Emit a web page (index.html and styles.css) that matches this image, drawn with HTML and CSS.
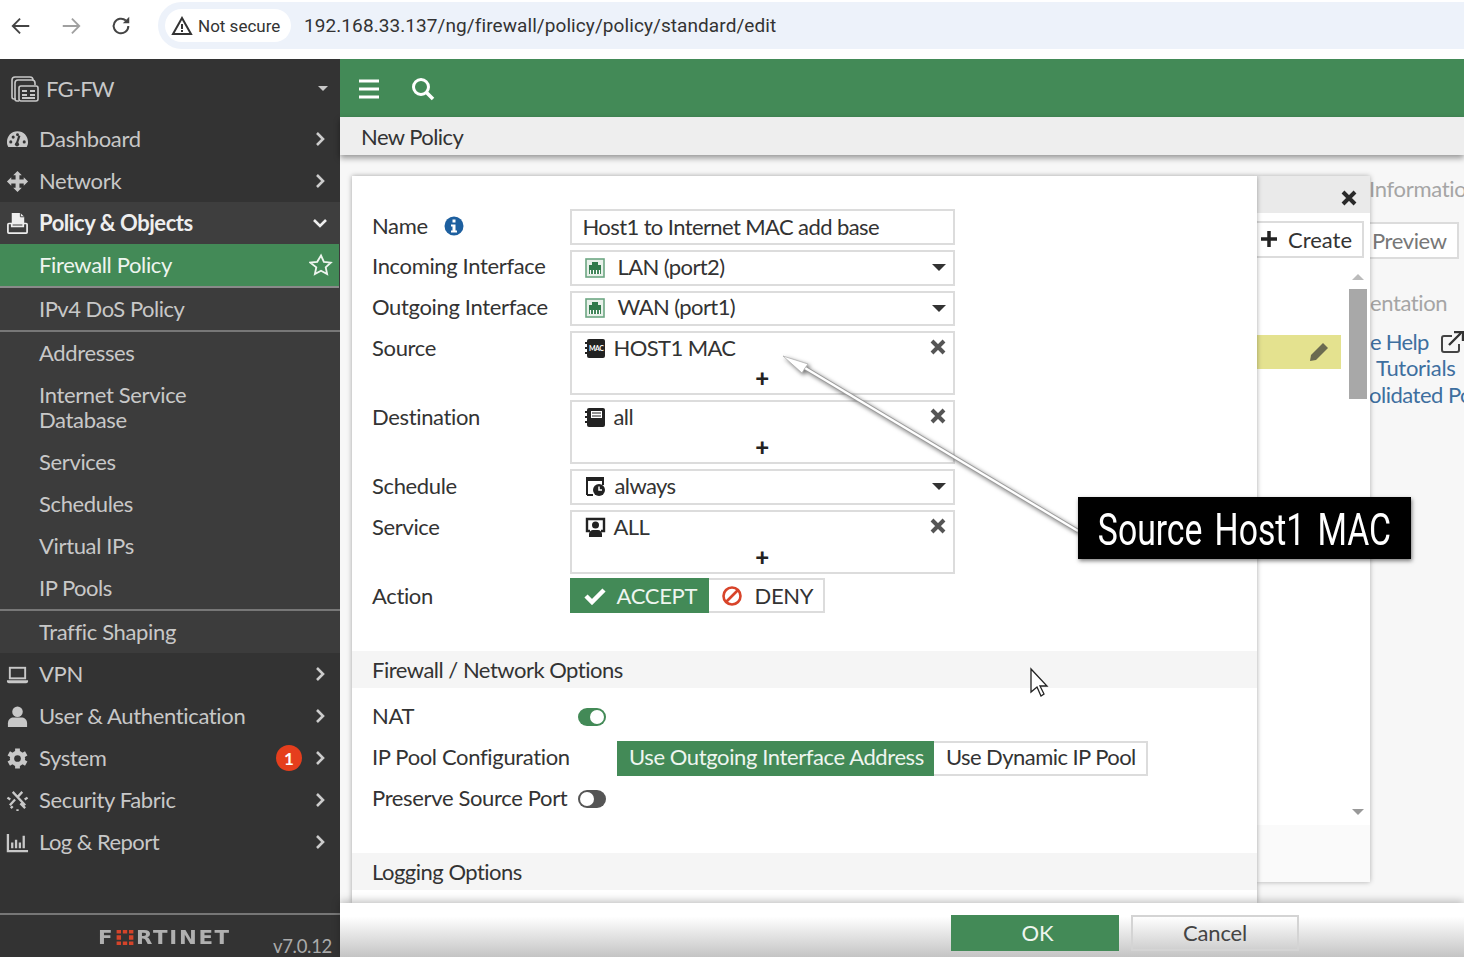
FILE: index.html
```html
<!DOCTYPE html>
<html lang="en">
<head>
    <meta charset="UTF-8">
    <title>New Policy</title>
    <link rel="stylesheet" href="styles.css">
</head>
<body>
    <!-- browser toolbar -->
    <div class="browser-bar">
        <svg class="nav-btn" width="22" height="22" viewBox="0 0 24 24"><path d="M21 12H4M11 4l-8 8 8 8" fill="none" stroke="#444" stroke-width="2"/></svg>
        <svg class="nav-btn" width="22" height="22" viewBox="0 0 24 24"><path d="M3 12h17M13 4l8 8-8 8" fill="none" stroke="#a0a0a0" stroke-width="2"/></svg>
        <svg class="nav-btn" width="22" height="22" viewBox="0 0 24 24"><path d="M20 12a8 8 0 1 1-2.6-5.9" fill="none" stroke="#444" stroke-width="2.2"/><path d="M21 2v7h-7z" fill="#444"/></svg>
        <div class="url-pill">
            <div class="secure-chip">
                <svg width="22" height="20" viewBox="0 0 22 20"><path d="M11 2L2 18h18z" fill="none" stroke="#333" stroke-width="2"/><path d="M10 8h2v5h-2zM10 14h2v2h-2z" fill="#333"/></svg>
                <span>Not secure</span>
            </div>
            <span class="url-text">192.168.33.137/ng/firewall/policy/policy/standard/edit</span>
        </div>
    </div>

    <div class="app">
        <!-- left menu -->
        <div class="sidebar">
            <div class="device">
                <svg width="30" height="30" viewBox="0 0 30 30" fill="none" stroke="#c8c8c8" stroke-width="1.6"><path d="M6 25H4a2 2 0 0 1-2-2V6a3 3 0 0 1 3-3h15a3 3 0 0 1 3 3"/><path d="M9 27H7a2 2 0 0 1-2-2V9a3 3 0 0 1 3-3h14a3 3 0 0 1 3 3v2"/><rect x="9" y="12" width="19" height="15" rx="2" fill="#333"/><path d="M12 17h5M20 17h5M12 21h5M20 21h5M12 24h13" stroke-width="2"/></svg>
                <span class="device-name">FG-FW</span>
                <span class="caret-light"></span>
            </div>

            <a class="nav-item">
                <svg class="nav-icon" viewBox="0 0 24 24"><path d="M12 3.500C5.700 3.500 1 8.500 1 14.500c0 2 .5 3.700 1.400 5.200h19.200c.9-1.500 1.400-3.200 1.400-5.200 0-6-4.700-11-11-11z" fill="#c8c8c8"/><path d="M11 17l3-9" stroke="#333" stroke-width="2.200"/><circle cx="5" cy="14.500" r="1.600" fill="#333"/><circle cx="7.500" cy="9.500" r="1.600" fill="#333"/><circle cx="12" cy="7" r="1.500" fill="#333"/><circle cx="19" cy="14.500" r="1.600" fill="#333"/><circle cx="11.500" cy="17" r="2.200" fill="#333"/></svg>
                <span class="nav-label">Dashboard</span>
                <svg class="chevron" viewBox="0 0 12 16"><path d="M3 2l6 6-6 6" fill="none" stroke="#ccc" stroke-width="2.600"/></svg>
            </a>
            <a class="nav-item">
                <svg class="nav-icon" viewBox="0 0 24 24"><path d="M12 1l4.500 4.500H14V10h4.500V7.500L23 12l-4.500 4.500V14H14v4.500h2.500L12 23l-4.500-4.500H10V14H5.500v2.500L1 12l4.500-4.500V10H10V5.500H7.500z" fill="#c8c8c8"/></svg>
                <span class="nav-label">Network</span>
                <svg class="chevron" viewBox="0 0 12 16"><path d="M3 2l6 6-6 6" fill="none" stroke="#ccc" stroke-width="2.600"/></svg>
            </a>
            <a class="nav-item nav-open">
                <svg class="nav-icon" viewBox="0 0 24 24"><path d="M6 1h9l4 4v8H6z" fill="#eee"/><path d="M15 1v4h4" fill="none" stroke="#444"/><path d="M3 12h3v3h12v-3h3a1 1 0 0 1 1 1v8a1 1 0 0 1-1 1H3a1 1 0 0 1-1-1v-8a1 1 0 0 1 1-1z" fill="none" stroke="#eee" stroke-width="1.800"/></svg>
                <span class="nav-label">Policy &amp; Objects</span>
                <svg class="chevron chevron-down" viewBox="0 0 16 12"><path d="M2 3l6 6 6-6" fill="none" stroke="#eee" stroke-width="2.600"/></svg>
            </a>
            <div class="sub-menu">
                <a class="sub-item sub-active">
                    <span class="nav-label">Firewall Policy</span>
                    <svg class="star" viewBox="0 0 24 24"><path d="M12 2.500l2.900 6.300 6.900.8-5.100 4.700 1.400 6.800-6.100-3.400-6.100 3.400 1.400-6.800L1.300 9.600l6.900-.8z" fill="none" stroke="#eef5ef" stroke-width="1.800"/></svg>
                </a>
                <a class="sub-item sub-line">IPv4 DoS Policy</a>
                <a class="sub-item">Addresses</a>
                <a class="sub-item sub-tall">Internet Service<br>Database</a>
                <a class="sub-item">Services</a>
                <a class="sub-item">Schedules</a>
                <a class="sub-item">Virtual IPs</a>
                <a class="sub-item sub-line">IP Pools</a>
                <a class="sub-item">Traffic Shaping</a>
            </div>
            <a class="nav-item">
                <svg class="nav-icon" viewBox="0 0 24 24"><rect x="4" y="5" width="16" height="11" fill="none" stroke="#c8c8c8" stroke-width="2"/><path d="M1 18h22v1a2 2 0 0 1-2 2H3a2 2 0 0 1-2-2z" fill="#c8c8c8"/></svg>
                <span class="nav-label">VPN</span>
                <svg class="chevron" viewBox="0 0 12 16"><path d="M3 2l6 6-6 6" fill="none" stroke="#ccc" stroke-width="2.600"/></svg>
            </a>
            <a class="nav-item">
                <svg class="nav-icon" viewBox="0 0 24 24"><circle cx="12" cy="7" r="5.500" fill="#c8c8c8"/><path d="M2 23v-4c0-4 3-6 6-6h8c3 0 6 2 6 6v4z" fill="#c8c8c8"/></svg>
                <span class="nav-label">User &amp; Authentication</span>
                <svg class="chevron" viewBox="0 0 12 16"><path d="M3 2l6 6-6 6" fill="none" stroke="#ccc" stroke-width="2.600"/></svg>
            </a>
            <a class="nav-item">
                <svg class="nav-icon" viewBox="0 0 24 24"><path d="M12 1.500v21M21.100 6.700L2.900 17.300M21.100 17.300L2.900 6.700" stroke="#c8c8c8" stroke-width="5"/><circle cx="12" cy="12" r="8" fill="#c8c8c8"/><circle cx="12" cy="12" r="3.500" fill="#333"/></svg>
                <span class="nav-label">System</span>
                <span class="badge">1</span>
                <svg class="chevron" viewBox="0 0 12 16"><path d="M3 2l6 6-6 6" fill="none" stroke="#ccc" stroke-width="2.600"/></svg>
            </a>
            <a class="nav-item">
                <svg class="nav-icon" viewBox="0 0 24 24"><path d="M7 3l13 14M17 3l-5.500 6M9.500 11L4 17M5 20l2-2M15 15l5 5" fill="none" stroke="#c8c8c8" stroke-width="2.400"/><path d="M1.500 9l3 2M22.500 9l-3 2M12 21v2" stroke="#c8c8c8" stroke-width="2.400"/></svg>
                <span class="nav-label">Security Fabric</span>
                <svg class="chevron" viewBox="0 0 12 16"><path d="M3 2l6 6-6 6" fill="none" stroke="#ccc" stroke-width="2.600"/></svg>
            </a>
            <a class="nav-item">
                <svg class="nav-icon" viewBox="0 0 24 24"><path d="M2 3v18h21" fill="none" stroke="#c8c8c8" stroke-width="2.400"/><path d="M6.500 12v6M10.500 9v9M14.500 12v6M18.500 5v13" stroke="#c8c8c8" stroke-width="2.400"/></svg>
                <span class="nav-label nav-tight">Log &amp; Report</span>
                <svg class="chevron" viewBox="0 0 12 16"><path d="M3 2l6 6-6 6" fill="none" stroke="#ccc" stroke-width="2.600"/></svg>
            </a>

            <div class="side-footer">
                <div class="logo">
                    <span class="logo-f">F</span>
                    <svg width="18" height="15" viewBox="0 0 19 17" fill="#d5442a"><path d="M0 0h5v4H0zM7 0h5v4H7zM14 0h5v4h-5zM0 6h5v5H0zM14 6h5v5h-5zM0 13h5v4H0zM7 13h5v4H7zM14 13h5v4h-5z"/></svg>
                    <span class="logo-rest">RTINET</span>
                </div>
                <span class="version">v7.0.12</span>
            </div>
        </div>

        <!-- main area -->
        <div class="main">
            <div class="topbar">
                <svg width="22" height="20" viewBox="0 0 22 20"><path d="M1 2h20M1 10h20M1 18h20" stroke="#fff" stroke-width="3"/></svg>
                <svg width="26" height="26" viewBox="0 0 26 26"><circle cx="11" cy="11" r="7.500" fill="none" stroke="#fff" stroke-width="3"/><path d="M16.500 16.500l6.500 6.500" stroke="#fff" stroke-width="3.500"/></svg>
            </div>
            <div class="title-bar">New Policy</div>

            <div class="content">
                <div class="dialog">
                    <div class="form-rows">
                        <div class="form-row">
                            <div class="form-label">Name <svg class="info-icon" width="20" height="20" viewBox="0 0 20 20"><circle cx="10" cy="10" r="9.500" fill="#1d5f9f"/><rect x="8.500" y="3.500" width="3" height="3" fill="#fff"/><path d="M7 8.500h4.500v6H13v2H7v-2h1.500v-4H7z" fill="#fff"/></svg></div>
                            <div class="field">Host1 to Internet MAC add base</div>
                        </div>
                        <div class="form-row row-high">
                            <div class="form-label">Incoming Interface</div>
                            <div class="field field-select">
                                <svg class="port-icon" width="20" height="20" viewBox="0 0 20 20"><rect x="1" y="1" width="18" height="18" fill="#e8f1ea" stroke="#6da783" stroke-width="1.600"/><path d="M4 11V7h3V4h6v3h3v4z" fill="#2f7a4a"/><path d="M4 11v5h12v-5z" fill="#2f7a4a"/><path d="M5.500 12v4M8.500 12v4M11.500 12v4M14.500 12v4" stroke="#fff" stroke-width="1.200"/></svg>
                                <span>LAN (port2)</span>
                                <span class="caret"></span>
                            </div>
                        </div>
                        <div class="form-row row-short row-high">
                            <div class="form-label">Outgoing Interface</div>
                            <div class="field field-select">
                                <svg class="port-icon" width="20" height="20" viewBox="0 0 20 20"><rect x="1" y="1" width="18" height="18" fill="#e8f1ea" stroke="#6da783" stroke-width="1.600"/><path d="M4 11V7h3V4h6v3h3v4z" fill="#2f7a4a"/><path d="M4 11v5h12v-5z" fill="#2f7a4a"/><path d="M5.500 12v4M8.500 12v4M11.500 12v4M14.500 12v4" stroke="#fff" stroke-width="1.200"/></svg>
                                <span>WAN (port1)</span>
                                <span class="caret"></span>
                            </div>
                        </div>
                        <div class="form-row row-multi">
                            <div class="form-label">Source</div>
                            <div class="field field-multi">
                                <div class="chip-row">
                                    <svg class="obj-icon" width="21" height="21" viewBox="0 0 21 21"><rect x="2" y="1" width="18" height="19" rx="2" fill="#222"/><path d="M0 5h3M0 10h3M0 15h3" stroke="#222" stroke-width="2"/><text x="4" y="13" class="mac-tag">MAC</text></svg>
                                    <span class="chip-text">HOST1 MAC</span>
                                    <svg class="remove" width="16" height="16" viewBox="0 0 16 16"><path d="M2 2l12 12M14 2L2 14" stroke="#555" stroke-width="4"/></svg>
                                </div>
                                <div class="add-row">+</div>
                            </div>
                        </div>
                        <div class="form-row row-multi">
                            <div class="form-label">Destination</div>
                            <div class="field field-multi">
                                <div class="chip-row">
                                    <svg class="obj-icon" width="21" height="21" viewBox="0 0 21 21"><rect x="2" y="1" width="18" height="19" rx="2" fill="#222"/><path d="M0 5h3M0 10h3M0 15h3" stroke="#222" stroke-width="2"/><rect x="6" y="4" width="11" height="7" fill="#fff"/><path d="M7 6h9M7 9h9" stroke="#222"/></svg>
                                    <span class="chip-text">all</span>
                                    <svg class="remove" width="16" height="16" viewBox="0 0 16 16"><path d="M2 2l12 12M14 2L2 14" stroke="#555" stroke-width="4"/></svg>
                                </div>
                                <div class="add-row">+</div>
                            </div>
                        </div>
                        <div class="form-row">
                            <div class="form-label">Schedule</div>
                            <div class="field field-select">
                                <svg class="obj-icon" width="21" height="21" viewBox="0 0 21 21"><path d="M2 19V2h16v7" fill="none" stroke="#222" stroke-width="2"/><path d="M2 2h16v3H2z" fill="#222"/><path d="M2 19h6" stroke="#222" stroke-width="2"/><circle cx="14" cy="14" r="6" fill="#222"/><path d="M14 10.500V14h3" fill="none" stroke="#fff" stroke-width="1.500"/></svg>
                                <span>always</span>
                                <span class="caret"></span>
                            </div>
                        </div>
                        <div class="form-row row-multi">
                            <div class="form-label">Service</div>
                            <div class="field field-multi">
                                <div class="chip-row">
                                    <svg class="obj-icon" width="21" height="21" viewBox="0 0 21 21"><path d="M5 14H2V2h17v12h-3" fill="none" stroke="#222" stroke-width="2.400"/><circle cx="10.500" cy="8" r="3.500" fill="#222"/><path d="M4 20v-3c0-2 2-4 4-4h5c2 0 4 2 4 4v3z" fill="#222"/></svg>
                                    <span class="chip-text">ALL</span>
                                    <svg class="remove" width="16" height="16" viewBox="0 0 16 16"><path d="M2 2l12 12M14 2L2 14" stroke="#555" stroke-width="4"/></svg>
                                </div>
                                <div class="add-row">+</div>
                            </div>
                        </div>
                        <div class="form-row row-action">
                            <div class="form-label">Action</div>
                            <div class="toggle-group">
                                <div class="opt opt-on opt-accept">
                                    <svg width="22" height="18" viewBox="0 0 22 18"><path d="M2 9l6 6L20 3" fill="none" stroke="#fff" stroke-width="4.500"/></svg>
                                    ACCEPT
                                </div>
                                <div class="opt opt-deny">
                                    <svg width="22" height="22" viewBox="0 0 22 22"><circle cx="11" cy="11" r="8.500" fill="none" stroke="#d8442a" stroke-width="2.600"/><path d="M5 17L17 5" stroke="#d8442a" stroke-width="2.600"/></svg>
                                    DENY
                                </div>
                            </div>
                        </div>
                    </div>

                    <div class="section-head section-firewall">Firewall / Network Options</div>
                    <div class="option-rows">
                        <div class="option-row">
                            <div class="form-label">NAT</div>
                            <div class="switch switch-on"><span></span></div>
                        </div>
                        <div class="option-row">
                            <div class="form-label pool-label">IP Pool Configuration</div>
                            <div class="toggle-group">
                                <div class="opt opt-on opt-pool">Use Outgoing Interface Address</div>
                                <div class="opt opt-pool opt-dynamic">Use Dynamic IP Pool</div>
                            </div>
                        </div>
                        <div class="option-row">
                            <div class="form-label">Preserve Source Port</div>
                            <div class="switch switch-off"><span></span></div>
                        </div>
                    </div>
                    <div class="section-head section-logging">Logging Options</div>
                </div>

                <div class="side-panel">
                    <div class="panel-head">
                        <svg width="16" height="16" viewBox="0 0 16 16"><path d="M2 2l12 12M14 2L2 14" stroke="#2a2a2a" stroke-width="4"/></svg>
                    </div>
                    <div class="create-btn">
                        <svg width="18" height="18" viewBox="0 0 18 18"><path d="M9 1v16M1 9h16" stroke="#222" stroke-width="3.500"/></svg>
                        Create
                    </div>
                    <div class="panel-body">
                        <div class="panel-list">
                            <div class="picked-row">
                                <svg width="22" height="22" viewBox="0 0 22 22"><path d="M15 2l5 5L8 19l-6 1 1-6z" fill="#6b6b50"/></svg>
                            </div>
                        </div>
                        <div class="panel-scroll">
                            <span class="scroll-up"></span>
                            <span class="scroll-thumb"></span>
                            <span class="scroll-down"></span>
                        </div>
                    </div>
                    <div class="panel-foot"></div>
                </div>

                <div class="info-panel">
                    <div class="info-title">Informatio</div>
                    <div class="preview-btn">Preview</div>
                    <div class="info-docs">entation</div>
                    <div class="info-link info-help">e Help
                        <svg width="24" height="22" viewBox="0 0 24 22"><path d="M12 5H4a2 2 0 0 0-2 2v12a2 2 0 0 0 2 2h13a2 2 0 0 0 2-2v-6" fill="none" stroke="#444" stroke-width="2"/><path d="M9 14L21 2M14 1h9v9" fill="none" stroke="#333" stroke-width="2.400"/></svg>
                    </div>
                    <div class="info-link info-tut">Tutorials</div>
                    <div class="info-link info-pol">olidated Pc</div>
                </div>
            </div>

            <div class="footer-bar">
                <div class="btn btn-ok">OK</div>
                <div class="btn btn-cancel">Cancel</div>
            </div>
        </div>
    </div>

    <!-- video annotation on top of the page -->
    <svg class="annotation" width="1464" height="957" viewBox="0 0 1464 957">
        <g class="arrow">
            <path d="M1078 531L805 368" stroke="#9a9a9a" stroke-width="4" fill="none"/>
            <path d="M1078 531L805 368" stroke="#fff" stroke-width="2.400" fill="none"/>
            <path d="M783 356l25 8-3 4-3 5z" fill="#fff" stroke="#b0b0b0" stroke-width="0.800"/>
        </g>
        <path d="M1031 669v23l6-5 4 9 3-2-4-8h7z" fill="#fff" stroke="#222" stroke-width="1.300"/>
    </svg>
    <div class="callout"><span>Source Host1 MAC</span></div>
</body>
</html>
```

FILE: styles.css
```css
* {
    margin: 0;
    padding: 0;
    box-sizing: border-box;
}

body {
    width: 1464px;
    height: 957px;
    overflow: hidden;
    background: #fff;
    color: #333;
    font-family: 'Lato', 'Open Sans', sans-serif;
    font-size: 22px;
    position: relative;
}

/* Browser toolbar */
.browser-bar {
    height: 59px;
    background: #fff;
    display: flex;
    align-items: flex-start;
    padding-left: 10px;
}

.nav-btn {
    margin-top: 15px;
    margin-right: 28px;
}

.nav-btn:nth-child(3) {
    margin-right: 0;
    margin-left: 0;
}

.url-pill {
    flex: 1;
    height: 47px;
    margin-top: 2px;
    margin-left: 26px;
    margin-right: -30px;
    background: #edf2fa;
    border-radius: 24px;
    display: flex;
    align-items: center;
    padding-left: 7px;
    font-family: 'Roboto', sans-serif;
}

.secure-chip {
    width: 126px;
    height: 33px;
    background: #fff;
    border-radius: 17px;
    display: flex;
    align-items: center;
    gap: 5px;
    padding-left: 6px;
    font-size: 17px;
    color: #333;
}

.url-text {
    margin-left: 13px;
    font-size: 19px;
    letter-spacing: 0.08px;
    color: #333;
}

/* Layout */
.app {
    display: flex;
    height: 898px;
}

/* Sidebar */
.sidebar {
    width: 340px;
    background: #333;
    color: #c8c8c8;
    display: flex;
    flex-direction: column;
    flex-shrink: 0;
}

.device {
    height: 59px;
    display: flex;
    align-items: center;
    padding-left: 10px;
    gap: 6px;
}

.device-name {
    font-size: 22px;
    flex: 1;
    letter-spacing: -0.8px;
}

.caret-light {
    width: 0;
    height: 0;
    border-left: 5px solid transparent;
    border-right: 5px solid transparent;
    border-top: 5px solid #c8c8c8;
    margin-right: 12px;
}

.nav-item {
    height: 42px;
    display: flex;
    align-items: center;
    padding-left: 6px;
    padding-right: 14px;
}

.nav-icon {
    width: 23px;
    height: 23px;
    margin-right: 10px;
    flex-shrink: 0;
}

.nav-label {
    flex: 1;
    font-size: 22px;
    letter-spacing: -0.35px;
    margin-top: -2px;
}

.nav-tight {
    letter-spacing: -0.55px;
}

.chevron {
    width: 12px;
    height: 16px;
}

.chevron-down {
    width: 16px;
    height: 12px;
    margin-right: -2px;
}

.nav-open {
    background: #3e3e3e;
    color: #eee;
}

.nav-open .nav-label {
    font-weight: 700;
    letter-spacing: -0.45px;
}

.badge {
    width: 26px;
    height: 26px;
    border-radius: 50%;
    background: #e53e1d;
    color: #fff;
    font-size: 17px;
    font-weight: 700;
    display: flex;
    align-items: center;
    justify-content: center;
    margin-right: 12px;
}

.sub-menu {
    background: #3c3c3c;
}

.sub-item {
    display: flex;
    align-items: center;
    height: 42px;
    padding-left: 39px;
    padding-bottom: 2px;
    font-size: 22px;
    letter-spacing: -0.35px;
}

.sub-active {
    height: 44px;
    background: #438a57;
    color: #eef5ef;
    border-bottom: 2px solid #8a8a8a;
    padding-right: 6px;
    padding-bottom: 0;
    margin-right: 1px;
}

.star {
    width: 24px;
    height: 24px;
}

.sub-line {
    height: 44px;
    border-bottom: 2px solid #777;
    letter-spacing: -0.5px;
}

.sub-tall {
    height: 67px;
    line-height: 25px;
}

.side-footer {
    margin-top: auto;
    height: 44px;
    border-top: 2px solid #777;
    display: flex;
    align-items: flex-start;
    position: relative;
}

.logo {
    display: flex;
    align-items: center;
    margin-left: 98px;
    margin-top: 13px;
    height: 18px;
    color: #b0b0b0;
    font-family: 'DejaVu Sans', sans-serif;
    font-weight: 700;
    font-size: 19px;
    letter-spacing: 1.5px;
}

.logo span {
    display: inline-block;
    transform-origin: left center;
    transform: scaleX(1.12);
}

.logo-f {
    width: 18px;
}

.logo-rest {
    margin-left: 2px;
}

.version {
    position: absolute;
    right: 8px;
    bottom: 0;
    font-size: 18.5px;
    color: #aaa;
    letter-spacing: -0.3px;
}

/* Main area */
.main {
    flex: 1;
    min-width: 0;
    display: flex;
    flex-direction: column;
    background: #f7f7f7;
}

.topbar {
    height: 58px;
    background: #438a57;
    display: flex;
    align-items: center;
    padding-left: 18px;
    padding-top: 1px;
    gap: 30px;
    flex-shrink: 0;
}

.title-bar {
    height: 38px;
    background: #eee;
    display: flex;
    align-items: center;
    padding-left: 21px;
    font-size: 22px;
    letter-spacing: -0.55px;
    box-shadow: 0 3px 6px rgba(0,0,0,0.4);
    position: relative;
    z-index: 3;
    flex-shrink: 0;
}

.content {
    flex: 1;
    min-height: 0;
    display: flex;
    align-items: flex-start;
    padding: 21px 0 0 12px;
    overflow: hidden;
}

/* Dialog */
.dialog {
    width: 905px;
    height: 727px;
    background: #fff;
    flex-shrink: 0;
    padding-top: 33px;
    box-shadow: 0 0 5px rgba(0,0,0,0.35);
    position: relative;
    z-index: 2;
}

.form-rows {
    display: flex;
    flex-direction: column;
    gap: 5px;
    padding-left: 20px;
}

.form-row {
    display: flex;
    height: 36px;
}

.row-short {
    height: 35px;
}

.row-multi {
    height: 64px;
}

.row-action {
    height: 35px;
    margin-top: -1px;
}

.form-label {
    width: 197.5px;
    font-size: 22px;
    letter-spacing: -0.35px;
    line-height: 34px;
    flex-shrink: 0;
    white-space: nowrap;
}

.row-high .form-label {
    line-height: 31px;
}

.row-action .form-label {
    line-height: 36px;
}

.info-icon {
    vertical-align: -2px;
    margin-left: 11px;
}

.field {
    width: 385px;
    border: 2px solid #dcdcdc;
    padding-left: 11px;
    padding-bottom: 2px;
    font-size: 22px;
    letter-spacing: -0.6px;
    display: flex;
    align-items: center;
}

.field-select {
    padding-left: 13px;
    padding-bottom: 4px;
    gap: 9px;
}

.port-icon {
    margin-right: 4px;
    margin-top: 3px;
}

.obj-icon {
    margin-top: 2px;
}

.caret {
    margin-left: auto;
    margin-right: 7px;
    margin-top: 3px;
    width: 0;
    height: 0;
    border-left: 7px solid transparent;
    border-right: 7px solid transparent;
    border-top: 7px solid #333;
}

.field-multi {
    display: block;
    padding: 0;
}

.chip-row {
    display: flex;
    align-items: center;
    height: 28px;
    padding: 0 7px 0 13px;
    gap: 8px;
}

.chip-text {
    flex: 1;
}

.mac-tag {
    font-family: 'Lato', sans-serif;
    font-size: 7px;
    font-weight: 700;
    fill: #fff;
}

.add-row {
    text-align: center;
    font-size: 24px;
    font-weight: 900;
    line-height: 33px;
    color: #222;
}

.toggle-group {
    display: flex;
}

.opt {
    height: 35px;
    border: 2px solid #dcdcdc;
    border-left: 0;
    background: #fff;
    display: flex;
    align-items: center;
    font-size: 22px;
    letter-spacing: -0.3px;
}

.opt-on {
    background: #438a57;
    border: 0;
    color: #eef5ef;
}

.opt-accept {
    width: 139px;
    padding-left: 14px;
    gap: 11px;
}

.opt-deny {
    width: 116px;
    padding-left: 12px;
    gap: 12px;
}

.opt-pool {
    padding: 0 10px 3px 12px;
    letter-spacing: -0.4px;
}

.opt-dynamic {
    letter-spacing: -0.55px;
}

/* Sections */
.section-head {
    height: 37px;
    background: #f5f5f5;
    padding-left: 20px;
    display: flex;
    align-items: center;
    font-size: 22px;
    letter-spacing: -0.5px;
}

.section-firewall {
    margin-top: 38px;
}

.section-logging {
    margin-top: 37px;
}

.option-rows {
    display: flex;
    flex-direction: column;
    gap: 7px;
    padding: 12px 0 0 20px;
}

.option-row {
    display: flex;
    align-items: center;
    height: 34px;
}

.option-row .form-label {
    width: 206px;
    margin-bottom: 2px;
}

.option-row .pool-label {
    width: 245px;
}

.switch {
    width: 28px;
    height: 18px;
    border-radius: 9px;
    display: flex;
    align-items: center;
    padding: 0 2px;
}

.switch span {
    width: 14px;
    height: 14px;
    border-radius: 50%;
    background: #fff;
}

.switch-on {
    background: #438a57;
    justify-content: flex-end;
}

.switch-off {
    background: #555;
}

/* Side panel behind the dialog */
.side-panel {
    width: 113px;
    height: 706px;
    background: #fff;
    flex-shrink: 0;
    box-shadow: 0 0 5px rgba(0,0,0,0.3);
    position: relative;
    z-index: 1;
    display: flex;
    flex-direction: column;
}

.panel-head {
    height: 37px;
    background: #eaeaea;
    display: flex;
    align-items: flex-end;
    justify-content: flex-end;
    padding: 0 13px 7px 0;
}

.create-btn {
    width: 107px;
    height: 37px;
    margin-top: 8px;
    border: 2px solid #dcdcdc;
    border-left: 0;
    display: flex;
    align-items: center;
    gap: 10px;
    padding-left: 3px;
    padding-bottom: 1px;
    font-size: 22px;
}

.panel-body {
    display: flex;
    height: 567px;
    padding: 10px 0;
}

.panel-list {
    width: 84px;
    padding-top: 67px;
}

.picked-row {
    height: 34px;
    background: #e4e28f;
    display: flex;
    align-items: center;
    justify-content: flex-end;
    padding-right: 11px;
}

.panel-scroll {
    width: 20px;
    margin-left: 7px;
    display: flex;
    flex-direction: column;
    align-items: center;
}

.scroll-up,
.scroll-down {
    width: 0;
    height: 0;
    border-left: 6px solid transparent;
    border-right: 6px solid transparent;
}

.scroll-up {
    margin-top: 6px;
    border-bottom: 6px solid #bbb;
}

.scroll-down {
    margin-top: auto;
    border-top: 6px solid #999;
}

.scroll-thumb {
    width: 18px;
    height: 110px;
    margin-top: 9px;
    background: #a8a8a8;
}

.panel-foot {
    flex: 1;
    background: #fafafa;
}

/* Info panel, mostly covered */
.info-panel {
    flex: 1;
    min-width: 0;
    overflow: hidden;
    font-size: 22px;
    white-space: nowrap;
}

.info-title {
    color: #a5a5a5;
    line-height: 30px;
    margin-top: -2px;
    margin-left: -1px;
    letter-spacing: -0.3px;
}

.preview-btn {
    width: 89px;
    height: 37px;
    margin-top: 18px;
    background: #fff;
    border: 2px solid #dcdcdc;
    border-left: 0;
    display: flex;
    align-items: center;
    padding-left: 2px;
    padding-bottom: 1px;
    letter-spacing: -0.4px;
    color: #777;
}

.info-docs {
    color: #a5a5a5;
    line-height: 30px;
    margin-top: 29px;
    letter-spacing: -0.4px;
}

.info-link {
    color: #3e6f9f;
    line-height: 26px;
    height: 26px;
    letter-spacing: -0.3px;
}

.info-help {
    margin-top: 11px;
    letter-spacing: -0.7px;
}

.info-help svg {
    vertical-align: -3px;
    margin-left: 6px;
}

.info-tut {
    padding-left: 6px;
    margin-top: 0;
}

.info-pol {
    margin-left: -1px;
    margin-top: 1px;
    letter-spacing: -0.5px;
}

/* Footer */
.footer-bar {
    height: 54px;
    flex-shrink: 0;
    background: linear-gradient(#fff, #fff 25%, #c4c4c4);
    box-shadow: 0 -2px 8px rgba(0,0,0,0.25);
    position: relative;
    z-index: 3;
    display: flex;
    align-items: flex-start;
    padding: 12px 0 0 611px;
    gap: 12px;
}

.btn {
    width: 168px;
    height: 36px;
    display: flex;
    align-items: center;
    justify-content: center;
    padding-bottom: 1px;
    font-size: 22px;
    letter-spacing: -0.2px;
}

.btn-ok {
    background: #438a57;
    color: #eef5ef;
    padding-left: 5px;
}

.btn-cancel {
    border: 2px solid #d4d4d4;
    color: #444;
}

/* Annotation over the page */
.annotation {
    position: absolute;
    left: 0;
    top: 0;
    z-index: 5;
    pointer-events: none;
}

.arrow {
    filter: drop-shadow(2px 2px 2px rgba(0,0,0,0.55));
}

.callout {
    position: absolute;
    left: 1078px;
    top: 497px;
    width: 333px;
    height: 62px;
    padding-top: 2px;
    background: #000;
    z-index: 6;
    box-shadow: 1px 2px 4px rgba(0,0,0,0.5);
    display: flex;
    align-items: center;
    justify-content: center;
    color: #fff;
    font-family: 'Roboto', sans-serif;
    font-size: 45px;
    white-space: nowrap;
}

.callout span {
    display: inline-block;
    transform: scaleX(0.75);
    word-spacing: 5px;
}
```
